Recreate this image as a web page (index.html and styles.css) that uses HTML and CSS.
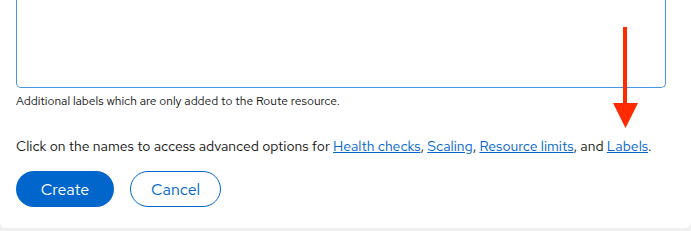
FILE: index.html
```html
<!DOCTYPE html>
<html>
<head>
<meta charset="utf-8">
<link rel="stylesheet" href="styles.css">
</head>
<body>
<div class="card">
  <div class="textarea"></div>
  <div class="helper">Additional labels which are only added to the Route resource.</div>
  <p class="advanced">Click on the names to access advanced options for <a href="#">Health checks</a>, <a href="#">Scaling</a>, <a href="#">Resource limits</a>, and <a href="#">Labels</a>.</p>
  <div class="actions">
    <button class="btn primary">Create</button>
    <button class="btn secondary">Cancel</button>
  </div>
</div>
<svg class="arrow" width="30" height="110" viewBox="0 0 30 110">
  <rect x="11" y="0" width="4" height="78" fill="#ff2a00"/>
  <polygon points="1,76 26,76 13.5,101" fill="#ff2a00"/>
</svg>
</body>
</html>
```
FILE: styles.css
```css
html, body {
  margin: 0;
  padding: 0;
}
body {
  background: #f0f0f0;
  font-family: "Red Hat Text", "Lato", "Liberation Sans", sans-serif;
  color: #151515;
  width: 691px;
  height: 231px;
  overflow: hidden;
  position: relative;
}
.card {
  background: #fff;
  height: 228px;
  box-sizing: border-box;
  padding: 0 16px 0 16px;
  border-radius: 0 0 6px 6px;
}
.textarea {
  width: 650px;
  height: 88px;
  box-sizing: border-box;
  border: 1px solid #4a93e6;
  border-top: none;
  border-radius: 0 0 5px 5px;
}
.helper {
  font-size: 12px;
  line-height: 18px;
  margin-top: 4px;
}
.advanced {
  margin: 26px 0 0 0;
  font-size: 14px;
  line-height: 21px;
}
.advanced a {
  color: #0066cc;
  text-decoration: underline;
}
.actions {
  display: flex;
  gap: 16px;
  margin-top: 14px;
}
.btn {
  height: 36px;
  border-radius: 18px;
  font-family: inherit;
  font-size: 16px;
  padding: 0;
  box-sizing: border-box;
}
.primary {
  background: #0066cc;
  color: #fff;
  border: none;
  width: 98px;
}
.secondary {
  background: #fff;
  color: #0066cc;
  border: 1px solid #0066cc;
  width: 91px;
}
.arrow {
  position: absolute;
  left: 612px;
  top: 27px;
}
```
